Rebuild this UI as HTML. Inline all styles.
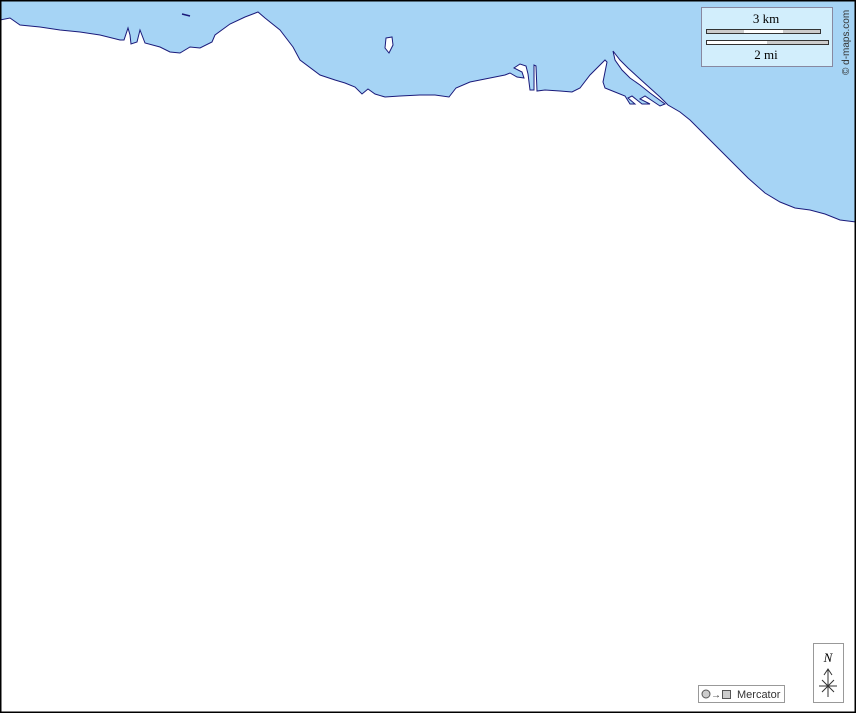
<!DOCTYPE html>
<html><head><style>
html,body{margin:0;padding:0;background:#fff}
.w{position:relative;width:856px;height:713px;overflow:hidden}
</style></head><body><div class="w">
<svg width="856" height="713" viewBox="0 0 856 713" style="position:absolute;left:0;top:0">
<rect x="0" y="0" width="856" height="713" fill="#fff"/>
<path d="M0,0 L856,0 L856,222 L840,220 L825,214 L810,210 L795,208 L780,202 L765,193 L748,178 L730,160 L715,145 L700,130 L690,120 L680,112 L668,105 L660,97 L650,88 L640,79 L628,68 L620,60 L613,51 L615,60 L622,70 L630,78 L640,85 L650,93 L665,104 L660,106 L645,96 L640,99 L650,104 L642,104 L632,96 L628,98 L635,104 L630,104 L625,96 L615,92 L605,88 L603,82 L607,62 L605,60 L590,75 L580,88 L572,92 L560,91 L545,90 L537,91 L536,66 L534,65 L534,90 L530,90 L528,74 L526,66 L520,64 L514,68 L522,72 L524,78 L517,77 L510,73 L505,75 L490,78 L470,82 L456,88 L449,97 L435,95 L420,95 L400,96 L385,97 L375,94 L368,89 L362,94 L355,87 L345,83 L335,80 L320,75 L300,60 L293,47 L280,30 L265,18 L258,12 L245,17 L230,24 L215,35 L212,42 L200,48 L190,47 L180,53 L170,52 L160,47 L145,43 L140,30 L137,42 L131,44 L130,35 L128,28 L124,40 L120,40 L100,35 L80,32 L60,30 L40,27 L20,25 L10,18 L0,20 Z" fill="#a6d4f5" stroke="#1a1a7a" stroke-width="1"/>
<path d="M386,38 L392,37 L393,45 L389,53 L385,48 Z" fill="#fff" stroke="#1a1a7a" stroke-width="1"/>
<path d="M182,14 L190,16" stroke="#1a1a7a" stroke-width="1.5"/>
<rect x="0.5" y="0.5" width="855" height="712" fill="none" stroke="#000" stroke-width="2"/>
<rect x="701.5" y="7.5" width="131" height="59" fill="#d2eefc" stroke="#8888a0"/>
<text x="766" y="23" text-anchor="middle" font-family="Liberation Serif" font-size="13">3 km</text>
<rect x="706.5" y="29.5" width="114" height="4" fill="#ccc" stroke="#333" stroke-width="1"/>
<rect x="744" y="30" width="39" height="3" fill="#fff"/>
<rect x="706.5" y="40.5" width="122" height="4" fill="#ccc" stroke="#333" stroke-width="1"/>
<rect x="707" y="41" width="60" height="3" fill="#fff"/>
<text x="766" y="59" text-anchor="middle" font-family="Liberation Serif" font-size="13">2 mi</text>
<text transform="translate(849,75) rotate(-90)" font-family="Liberation Sans" font-size="10" fill="#333">© d-maps.com</text>
<rect x="698.5" y="685.5" width="86" height="17" fill="#fff" stroke="#999"/>
<circle cx="706" cy="694" r="4" fill="#ccc" stroke="#555"/>
<text x="711" y="698" font-family="Liberation Sans" font-size="10" fill="#333">→</text>
<rect x="722.5" y="690.5" width="8" height="8" fill="#ccc" stroke="#555"/>
<text x="737" y="698" font-family="Liberation Sans" font-size="11" fill="#333">Mercator</text>
<rect x="813.5" y="643.5" width="30" height="59" fill="#fff" stroke="#999"/>
<text x="828" y="662" text-anchor="middle" font-family="Liberation Serif" font-style="italic" font-size="13">N</text>
<path d="M828,697 L828,670 M824,675 L828,669 L832,675 M819,686 L837,686 M822,680 L834,692 M834,680 L822,692" stroke="#333" stroke-width="1" fill="none"/>
</svg>
</div></body></html>
